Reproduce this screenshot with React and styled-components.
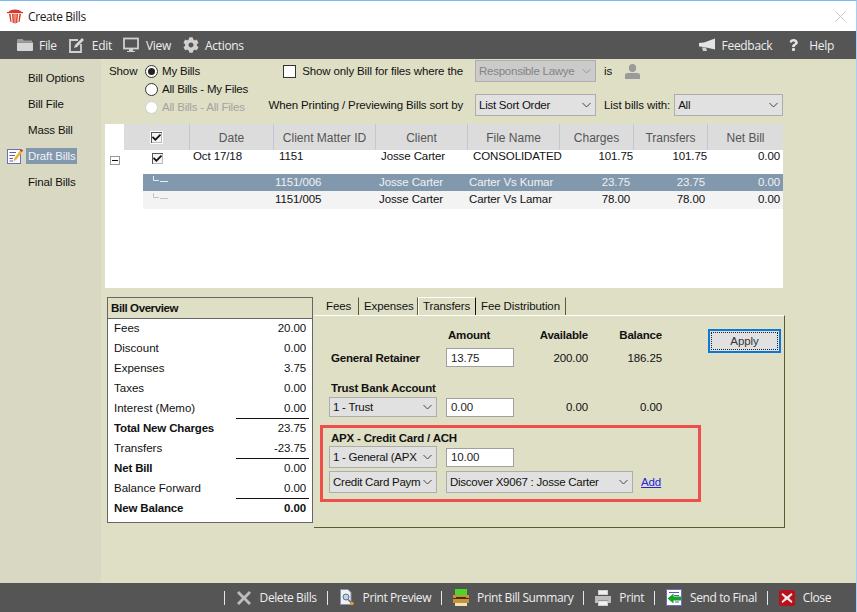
import React from "react";
import styled, { createGlobalStyle } from "styled-components";
import { FaCog, FaQuestion, FaCheck } from "react-icons/fa";

const GlobalStyle = createGlobalStyle`
  html, body {
    margin: 0;
    padding: 0;
    overflow: hidden;
  }
  * {
    box-sizing: border-box;
  }
`;

const Window = styled.div`
  width: 857px;
  height: 612px;
  display: flex;
  flex-direction: column;
  background: #dfdfc5;
  border-top: 1px solid #7cb8f2;
  border-right: 1px solid #a9cdf2;
  font-family: "Liberation Sans", Arial, sans-serif;
  font-size: 11.5px;
  letter-spacing: -0.1px;
  color: #111;
`;

const TitleBar = styled.div`
  height: 30px;
  flex: none;
  display: flex;
  align-items: center;
  background: #fff;
  padding: 0 10px 0 7px;
  font-family: "Open Sans", sans-serif;
  font-size: 12px;
  letter-spacing: -0.4px;
  color: #1a1a1a;
`;

const TitleText = styled.span`
  margin-left: 5px;
  flex: 1;
`;

const DarkBar = styled.div`
  flex: none;
  display: flex;
  align-items: center;
  background: #555;
  color: #eee;
  font-family: "Open Sans", sans-serif;
  font-size: 12px;
  letter-spacing: -0.3px;
`;

const MenuBar = styled(DarkBar)`
  height: 28px;
  padding: 0 22px 0 17px;
`;

const MenuItem = styled.div`
  display: flex;
  align-items: center;
  gap: ${(p) => p.$gap ?? 6}px;
  margin-right: ${(p) => p.$after ?? 12}px;
`;

const Spacer = styled.div`
  flex: 1;
`;

const Body = styled.div`
  flex: 1;
  display: flex;
  min-height: 0;
`;

const Sidebar = styled.div`
  width: 101px;
  flex: none;
  background: #d9d9c3;
  padding-top: 6px;
`;

const SideItem = styled.div`
  height: 26px;
  display: flex;
  align-items: center;
  padding-left: 7px;
`;

const SideIcon = styled.div`
  width: 16px;
  height: 17px;
  margin-right: 3px;
  flex: none;
`;

const SideLabel = styled.span`
  padding: 0 1px 0 2px;
  height: 16px;
  line-height: 16px;
  letter-spacing: -0.15px;
  background: ${(p) => (p.$active ? "#8298ad" : "transparent")};
  color: ${(p) => (p.$active ? "#f0f3f6" : "#111")};
`;

const Main = styled.div`
  flex: 1;
  display: flex;
  flex-direction: column;
  min-width: 0;
`;

const OptionsBar = styled.div`
  height: 65px;
  flex: none;
  display: flex;
  padding-left: 8px;
`;

const ShowBlock = styled.div`
  width: 161px;
  flex: none;
  display: flex;
  padding-top: 3px;
`;

const ShowLabel = styled.div`
  width: 36px;
  height: 18px;
  line-height: 18px;
`;

const RadioRow = styled.div`
  height: 18px;
  display: flex;
  align-items: center;
  gap: 4px;
  letter-spacing: -0.2px;
  color: ${(p) => (p.$disabled ? "#a3a3a3" : "#111")};
`;

const Radio = styled.span`
  width: 13px;
  height: 13px;
  flex: none;
  border-radius: 50%;
  background: #fff;
  border: 1px solid ${(p) => (p.$disabled ? "#cfcfcf" : "#333")};
  display: flex;
  align-items: center;
  justify-content: center;
  &::after {
    content: "";
    width: 7px;
    height: 7px;
    border-radius: 50%;
    background: ${(p) => (p.$checked ? "#222" : "transparent")};
  }
`;

const FilterGrid = styled.div`
  display: grid;
  grid-template-columns: 193px 121px auto;
  grid-template-rows: 22px 22px;
  column-gap: 12px;
  row-gap: 12px;
  padding-top: 1px;
  align-items: center;
`;

const FilterLabel = styled.div`
  display: flex;
  align-items: center;
  justify-content: flex-end;
  gap: 6px;
  white-space: nowrap;
  letter-spacing: -0.14px;
`;

const Check = styled.span`
  width: 13px;
  height: 13px;
  flex: none;
  background: #fff;
  border: 1px solid #333;
`;

const Trailing = styled.div`
  display: flex;
  align-items: center;
  gap: ${(p) => p.$gap}px;
  white-space: nowrap;
  margin-left: -4px;
`;

const Select = styled.div`
  width: ${(p) => p.$width || 108}px;
  height: ${(p) => p.$height || 22}px;
  flex: none;
  display: flex;
  align-items: center;
  padding: 0 4px 0 3px;
  letter-spacing: -0.25px;
  background: ${(p) => (p.$disabled ? "#cbcbcb" : "#e1e1e1")};
  border: 1px solid #adadad;
  color: ${(p) => (p.$disabled ? "#848484" : "#111")};
`;

const SelectText = styled.span`
  flex: 1;
  overflow: hidden;
  white-space: nowrap;
`;

const Chevron = ({ disabled }) => (
  <svg width="9" height="6" viewBox="0 0 9 6" style={{ flex: "none", marginLeft: 2 }}>
    <path d="M0.5 1 L4.5 5 L8.5 1" fill="none" stroke={disabled ? "#999" : "#444"} strokeWidth="1" />
  </svg>
);

const Dropdown = ({ children, width, height, disabled }) => (
  <Select $width={width} $height={height} $disabled={disabled}>
    <SelectText>{children}</SelectText>
    <Chevron disabled={disabled} />
  </Select>
);

const List = styled.div`
  width: 678px;
  height: 164px;
  flex: none;
  margin-left: 4px;
  background: #fff;
`;

const COLS = "66px 84px 102px 92px 92px 74px 74px 75px";

const HeaderRow = styled.div`
  display: grid;
  grid-template-columns: ${COLS};
  height: 26px;
  margin-left: 19px;
  background: #dcdcdc;
`;

const HeaderCell = styled.div`
  display: flex;
  align-items: center;
  justify-content: center;
  padding-top: ${(p) => (p.$flat ? 0 : 1)}px;
  font-size: 12px;
  letter-spacing: 0;
  color: #555;
  border-right: 1px solid #c6c6d2;
  &:last-child {
    border-right: none;
  }
`;

const ParentRow = styled.div`
  display: grid;
  grid-template-columns: 19px ${COLS};
  height: 24px;
`;

const SubRow = styled.div`
  display: grid;
  grid-template-columns: 47px 84px 102px 92px 92px 74px 74px 75px;
  margin-left: 38px;
  padding-bottom: ${(p) => p.$height - 16}px;
  height: ${(p) => p.$height}px;
  align-items: center;
  background: ${(p) => (p.$selected ? "#8298ad" : "#f3f3f3")};
  color: ${(p) => (p.$selected ? "#eef1f4" : "#111")};
`;

const Cell = styled.div`
  text-align: ${(p) => (p.$right ? "right" : "left")};
  padding-left: ${(p) => (p.$right ? 0 : p.$pad ?? 0)}px;
  padding-right: ${(p) => (p.$right ? p.$pad ?? 0 : 0)}px;
  white-space: nowrap;
`;

const CheckCell = styled.div`
  display: flex;
  justify-content: center;
  padding-top: ${(p) => p.$top || 0}px;
`;

const ToggleCell = styled.div`
  padding: 6px 0 0 5px;
`;

const Toggle = styled.div`
  width: 10px;
  height: 9px;
  border: 1px solid #999;
  background: #fff;
  display: flex;
  align-items: center;
  justify-content: center;
  &::after {
    content: "";
    width: 6px;
    height: 1px;
    background: #111;
  }
`;

const GridCheck = styled.div`
  width: 13px;
  height: 13px;
  display: flex;
  align-items: center;
  justify-content: center;
  background: #f4f4f4;
  border: 1px solid #fff;
  box-shadow: inset 1px 1px 0 #555, inset -1px -1px 0 #bbb;
  color: #111;
  font-size: 9px;
`;

const BottomArea = styled.div`
  display: flex;
  padding: 9px 0 0 6px;
`;

const Overview = styled.div`
  width: 206px;
  height: 226px;
  flex: none;
  display: flex;
  flex-direction: column;
  background: #fff;
  border: 1px solid #666;
`;

const OverviewHeader = styled.div`
  height: 21px;
  flex: none;
  display: flex;
  align-items: center;
  padding-left: 3px;
  background: #dfdfc5;
  border-bottom: 1px solid #666;
  font-weight: bold;
  letter-spacing: -0.4px;
`;

const OverviewRow = styled.div`
  height: 20px;
  display: flex;
  align-items: stretch;
  justify-content: space-between;
  padding: 0 3px 0 6px;
  font-weight: ${(p) => (p.$bold ? "bold" : "normal")};
  letter-spacing: ${(p) => (p.$bold ? "-0.15px" : "0")};
`;

const OverviewName = styled.span`
  line-height: 19px;
`;

const OverviewValue = styled.span`
  width: 73px;
  text-align: right;
  padding-right: 3px;
  line-height: 19px;
  letter-spacing: -0.1px;
  font-weight: ${(p) => (p.$bold ? "bold" : "normal")};
  border-bottom: 1px solid ${(p) => (p.$line ? "#111" : "transparent")};
`;

const TabArea = styled.div`
  width: 471px;
  height: 231px;
  flex: none;
  margin-left: 1px;
  display: flex;
  flex-direction: column;
`;

const TabStrip = styled.div`
  height: 18px;
  flex: none;
  display: flex;
  align-items: stretch;
  padding-left: 7px;
`;

const Tab = styled.div`
  display: flex;
  align-items: center;
  width: ${(p) => p.$width}px;
  padding: 0 0 2px ${(p) => p.$pad}px;
  white-space: nowrap;
  border-right: 1px solid ${(p) => (p.$active ? "#111" : "#5c5c32")};
  border-left: 1px solid ${(p) => (p.$active ? "#fff" : "transparent")};
  border-top: 1px solid ${(p) => (p.$active ? "#fff" : "transparent")};
`;

const TabPanel = styled.div`
  flex: 1;
  display: flex;
  padding-left: 15px;
  border-top: 1px solid #fff;
  border-right: 1px solid #5c5c32;
  border-bottom: 1px solid #5c5c32;
`;

const TransferColumn = styled.div`
  width: 372px;
  flex: none;
`;

const AmountRow = styled.div`
  display: grid;
  grid-template-columns: 108px 68px 65px 65px;
  column-gap: 9px;
  align-items: center;
  height: ${(p) => p.$height}px;
  margin-top: ${(p) => p.$top}px;
`;

const Heading = styled.div`
  font-weight: bold;
  letter-spacing: -0.2px;
  white-space: nowrap;
  padding-left: ${(p) => p.$pad ?? 2}px;
  text-align: ${(p) => (p.$right ? "right" : "left")};
`;

const Amount = styled.div`
  text-align: right;
`;

const Input = styled.div`
  width: 68px;
  height: 19px;
  display: flex;
  align-items: center;
  padding-left: 4px;
  background: #fff;
  border: 1px solid #a0a0a0;
  color: #222;
`;

const SectionTitle = styled(Heading)`
  height: 14px;
  line-height: 14px;
  margin-top: ${(p) => p.$top}px;
`;

const CardBox = styled.div`
  width: 381px;
  height: 77px;
  margin: 8px 0 0 -9px;
  padding: 3px 0 0 6px;
  border: 3px solid #ef4f4b;
`;

const CardRow = styled.div`
  display: flex;
  align-items: center;
  gap: 9px;
  height: 22px;
  margin-top: ${(p) => p.$top}px;
`;

const AddLink = styled.a`
  margin-left: -1px;
  color: #2323e0;
  text-decoration: underline;
`;

const ApplyButton = styled.div`
  width: 73px;
  height: 24px;
  flex: none;
  margin: 13px 0 0 7px;
  padding: 1px;
  display: flex;
  background: #e1e1e1;
  border: 2px solid #0a78d7;
`;

const ApplyInner = styled.div`
  flex: 1;
  display: flex;
  align-items: center;
  justify-content: center;
  border: 1px dotted #222;
  color: #333;
`;

const Footer = styled(DarkBar)`
  height: 29px;
  justify-content: flex-end;
  padding-right: 25px;
  letter-spacing: -0.41px;
`;

const FooterAction = styled.div`
  display: flex;
  align-items: center;
  &::before {
    content: "";
    width: 1px;
    height: 14px;
    margin: 0 11px 0 10px;
    background: #e6e6e6;
  }
`;

const FooterLabel = styled.span`
  margin-left: 8px;
`;

const LogoIcon = () => (
  <svg width="16" height="16" viewBox="0 0 16 16">
    <path d="M1 4.5 C3 0.5 13 0.5 15 4.5 Z" fill="#d83a26" />
    <path d="M0 4 H16 V5.2 H0 Z" fill="#d83a26" />
    <path d="M2 6 H3.6 L4.6 14 H3.4 Z M5 6 H6.6 L7 15 H5.7 Z M9.4 6 H11 L10.3 15 H9 Z M12.4 6 H14 L12.6 14 H11.4 Z M7.4 6 H8.6 V15.5 H7.4 Z" fill="#d83a26" />
  </svg>
);

const CloseIcon = () => (
  <svg width="11" height="11" viewBox="0 0 11 11">
    <path d="M0.5 0.5 L10.5 10.5 M10.5 0.5 L0.5 10.5" stroke="#c4c4c4" strokeWidth="1" />
  </svg>
);

const FolderIcon = () => (
  <svg width="16" height="14" viewBox="0 0 16 14">
    <path d="M0 2 Q0 1 1 1 H5.5 L7 2.5 H15 V4 H0 Z" fill="#9c9c9c" />
    <path d="M0 4.5 H16 V12 Q16 13 15 13 H1 Q0 13 0 12 Z" fill="#d6d6d6" />
  </svg>
);

const EditIcon = () => (
  <svg width="16" height="16" viewBox="0 0 16 16">
    <path d="M9 3 H1 V15 H12 V7" fill="none" stroke="#d0d0d0" strokeWidth="1.8" />
    <path d="M5 11 L6 8 L13 1 L15 3 L8 10 Z" fill="#d8d8d8" />
  </svg>
);

const MonitorIcon = () => (
  <svg width="16" height="16" viewBox="0 0 16 16">
    <rect x="1" y="1.5" width="14" height="10" fill="none" stroke="#d0d0d0" strokeWidth="1.8" />
    <path d="M6 12 H10 V14 H12 V15 H4 V14 H6 Z" fill="#d0d0d0" />
  </svg>
);

const MegaphoneIcon = () => (
  <svg width="16" height="14" viewBox="0 0 16 14">
    <path d="M0 5 L5 4.5 L16 0.5 V11.5 L5 9 L0 8.5 Z" fill="#e4e4e4" />
    <path d="M3 9.5 H7 L8 13 H4 Z" fill="#d0d0d0" />
  </svg>
);

const UserIcon = () => (
  <svg width="15" height="15" viewBox="0 0 15 15">
    <ellipse cx="7.5" cy="4" rx="3.6" ry="4" fill="#9a9a9a" />
    <path d="M0 15 V11 Q0 9 3 9 H12 Q15 9 15 11 V15 Z" fill="#9a9a9a" />
  </svg>
);

const NotepadIcon = () => (
  <svg width="16" height="17" viewBox="0 0 16 17">
    <rect x="0.5" y="1.5" width="13" height="14" fill="#fff" stroke="#6c70b8" />
    <path d="M2.5 4.5 H9 M2.5 7.5 H8 M2.5 10.5 H6 M2.5 13 H6" stroke="#5a5fb0" strokeWidth="1" />
    <path d="M6.5 13.5 L7.5 10 L13 2.5 L15 4 L9.5 11.5 Z" fill="#eab52c" />
    <path d="M13 2.5 L14 1 L16 2.5 L15 4 Z" fill="#d8261c" />
  </svg>
);

const TreeIcon = ({ color }) => (
  <svg
    width="16"
    height="7"
    viewBox="0 0 16 7"
    style={{ marginLeft: 10, display: "block", alignSelf: "start", marginTop: 2 }}
  >
    <path d="M0.5 0 V4.5 H6 M7 5.5 H15" fill="none" stroke={color} strokeWidth="1" />
  </svg>
);

const TrashIcon = () => (
  <svg width="16" height="16" viewBox="0 0 16 16">
    <path d="M1 3 L3 1 L8 6 L13 1 L15 3 L10 8 L15 13 L13 15 L8 10 L3 15 L1 13 L6 8 Z" fill="#bdbdbd" />
  </svg>
);

const PreviewIcon = () => (
  <svg width="16" height="17" viewBox="0 0 16 17">
    <path d="M1.5 0.5 H9 L12 3.5 V15.5 H1.5 Z" fill="#eef1f6" stroke="#8a94a8" />
    <circle cx="7" cy="8" r="3" fill="#bcd0e6" stroke="#66707f" />
    <path d="M9 10.5 L12.5 14" stroke="#66707f" strokeWidth="1.6" />
    <circle cx="13" cy="14.5" r="1.8" fill="#e79a2b" />
  </svg>
);

const SummaryIcon = () => (
  <svg width="16" height="17" viewBox="0 0 16 17">
    <rect x="2" y="0" width="12" height="7" fill="#49d829" />
    <rect x="0" y="6" width="16" height="8" fill="#c8923a" />
    <path d="M0 9.5 H16" stroke="#4a3410" strokeWidth="1" />
    <rect x="3" y="8" width="10" height="1" fill="#3d2c0c" />
    <rect x="2" y="14" width="12" height="3" fill="#f3e2b8" />
  </svg>
);

const PrintIcon = () => (
  <svg width="16" height="16" viewBox="0 0 16 16">
    <rect x="3.5" y="0.5" width="9" height="4" fill="#f0f0f0" stroke="#cfcfcf" />
    <path d="M0 6 H16 V13 H13 V10 H3 V13 H0 Z" fill="#bcbcbc" />
    <rect x="3.5" y="11" width="9" height="4.5" fill="#f0f0f0" stroke="#cfcfcf" />
  </svg>
);

const SendIcon = () => (
  <svg width="16" height="17" viewBox="0 0 16 17">
    <rect x="0.5" y="0.5" width="15" height="16" fill="#fff" stroke="#6c70b8" />
    <path d="M3 3.5 H13 M8 6.5 H13 M9 13 H13" stroke="#5a5fb0" strokeWidth="1" />
    <path d="M1.5 9.5 L7.5 4.5 V7.5 H15 V11.5 H7.5 V14.5 Z" fill="#12a51e" />
  </svg>
);

const CloseBadgeIcon = () => (
  <svg width="16" height="16" viewBox="0 0 16 16">
    <rect x="0" y="0" width="16" height="16" rx="2.5" fill="#b8111a" />
    <path d="M3.5 3 L8 6.4 L12.5 3 L13.5 4.5 L10 8 L13.5 11.5 L12.5 13 L8 9.6 L3.5 13 L2.5 11.5 L6 8 L2.5 4.5 Z" fill="#f1ecec" />
  </svg>
);

const sideItems = ["Bill Options", "Bill File", "Mass Bill", "Draft Bills", "Final Bills"];

const subRows = [
  { id: "1151/006", client: "Josse Carter", file: "Carter Vs Kumar", charges: "23.75", transfers: "23.75", net: "0.00", selected: true, height: 17 },
  { id: "1151/005", client: "Josse Carter", file: "Carter Vs Lamar", charges: "78.00", transfers: "78.00", net: "0.00", height: 18 },
];

const overviewRows = [
  { name: "Fees", value: "20.00" },
  { name: "Discount", value: "0.00" },
  { name: "Expenses", value: "3.75" },
  { name: "Taxes", value: "0.00" },
  { name: "Interest (Memo)", value: "0.00", line: true },
  { name: "Total New Charges", value: "23.75", bold: true },
  { name: "Transfers", value: "-23.75", line: true },
  { name: "Net Bill", value: "0.00", bold: true },
  { name: "Balance Forward", value: "0.00", line: true },
  { name: "New Balance", value: "0.00", bold: true, boldValue: true },
];

const footerActions = [
  { label: "Delete Bills", icon: <TrashIcon /> },
  { label: "Print Preview", icon: <PreviewIcon /> },
  { label: "Print Bill Summary", icon: <SummaryIcon /> },
  { label: "Print", icon: <PrintIcon /> },
  { label: "Send to Final", icon: <SendIcon /> },
  { label: "Close", icon: <CloseBadgeIcon /> },
];

const App = () => {
  return (
    <Window>
      <GlobalStyle />
      <TitleBar>
        <LogoIcon />
        <TitleText>Create Bills</TitleText>
        <CloseIcon />
      </TitleBar>
      <MenuBar>
        <MenuItem>
          <FolderIcon />
          File
        </MenuItem>
        <MenuItem $gap={7} $after={11}>
          <EditIcon />
          Edit
        </MenuItem>
        <MenuItem $gap={7}>
          <MonitorIcon />
          View
        </MenuItem>
        <MenuItem>
          <FaCog size={16} color="#d0d0d0" />
          Actions
        </MenuItem>
        <Spacer />
        <MenuItem $gap={7} $after={17}>
          <MegaphoneIcon />
          Feedback
        </MenuItem>
        <MenuItem $gap={11} $after={0}>
          <FaQuestion color="#e4e4e4" style={{ width: 9, height: 14 }} />
          Help
        </MenuItem>
      </MenuBar>
      <Body>
        <Sidebar>
          {sideItems.map((item) => (
            <SideItem key={item}>
              <SideIcon>{item === "Draft Bills" && <NotepadIcon />}</SideIcon>
              <SideLabel $active={item === "Draft Bills"}>{item}</SideLabel>
            </SideItem>
          ))}
        </Sidebar>
        <Main>
          <OptionsBar>
            <ShowBlock>
              <ShowLabel>Show</ShowLabel>
              <div>
                <RadioRow>
                  <Radio $checked />
                  My Bills
                </RadioRow>
                <RadioRow>
                  <Radio />
                  All Bills - My Files
                </RadioRow>
                <RadioRow $disabled>
                  <Radio $disabled />
                  All Bills - All Files
                </RadioRow>
              </div>
            </ShowBlock>
            <FilterGrid>
              <FilterLabel>
                <Check />
                Show only Bill for files where the
              </FilterLabel>
              <Dropdown width={121} disabled>
                Responsible Lawye
              </Dropdown>
              <Trailing $gap={13}>
                is
                <UserIcon />
              </Trailing>
              <FilterLabel>When Printing / Previewing Bills sort by</FilterLabel>
              <Dropdown width={121}>List Sort Order</Dropdown>
              <Trailing $gap={4}>
                List bills with:
                <Dropdown width={109}>All</Dropdown>
              </Trailing>
            </FilterGrid>
          </OptionsBar>
          <List>
            <HeaderRow>
              <HeaderCell $flat>
                <GridCheck>
                  <FaCheck />
                </GridCheck>
              </HeaderCell>
              <HeaderCell>Date</HeaderCell>
              <HeaderCell>Client Matter ID</HeaderCell>
              <HeaderCell>Client</HeaderCell>
              <HeaderCell>File Name</HeaderCell>
              <HeaderCell>Charges</HeaderCell>
              <HeaderCell>Transfers</HeaderCell>
              <HeaderCell>Net Bill</HeaderCell>
            </HeaderRow>
            <ParentRow>
              <ToggleCell>
                <Toggle />
              </ToggleCell>
              <CheckCell $top={2}>
                <GridCheck>
                  <FaCheck />
                </GridCheck>
              </CheckCell>
              <Cell $pad={3}>Oct 17/18</Cell>
              <Cell $pad={5}>1151</Cell>
              <Cell $pad={5}>Josse Carter</Cell>
              <Cell $pad={5}>CONSOLIDATED</Cell>
              <Cell $right $pad={1}>101.75</Cell>
              <Cell $right $pad={1}>101.75</Cell>
              <Cell $right $pad={3}>0.00</Cell>
            </ParentRow>
            {subRows.map((row) => (
              <SubRow key={row.id} $selected={row.selected} $height={row.height}>
                <TreeIcon color={row.selected ? "#e8edf2" : "#c4c4c4"} />
                <span />
                <Cell $pad={1}>{row.id}</Cell>
                <Cell $pad={3}>{row.client}</Cell>
                <Cell $pad={1}>{row.file}</Cell>
                <Cell $right $pad={4}>{row.charges}</Cell>
                <Cell $right $pad={3}>{row.transfers}</Cell>
                <Cell $right $pad={3}>{row.net}</Cell>
              </SubRow>
            ))}
          </List>
          <BottomArea>
            <Overview>
              <OverviewHeader>Bill Overview</OverviewHeader>
              {overviewRows.map((row) => (
                <OverviewRow key={row.name} $bold={row.bold}>
                  <OverviewName>{row.name}</OverviewName>
                  <OverviewValue $line={row.line} $bold={row.boldValue}>
                    {row.value}
                  </OverviewValue>
                </OverviewRow>
              ))}
            </Overview>
            <TabArea>
              <TabStrip>
                <Tab $width={38} $pad={4}>Fees</Tab>
                <Tab $width={59} $pad={4}>Expenses</Tab>
                <Tab $width={58} $pad={4} $active>Transfers</Tab>
                <Tab $width={90} $pad={4}>Fee Distribution</Tab>
              </TabStrip>
              <TabPanel>
                <TransferColumn>
                  <AmountRow $height={16} $top={11}>
                    <span />
                    <Heading>Amount</Heading>
                    <Heading $right $pad={0}>Available</Heading>
                    <Heading $right $pad={0}>Balance</Heading>
                  </AmountRow>
                  <AmountRow $height={19} $top={5}>
                    <Heading>General Retainer</Heading>
                    <Input>13.75</Input>
                    <Amount>200.00</Amount>
                    <Amount>186.25</Amount>
                  </AmountRow>
                  <SectionTitle $top={14}>Trust Bank Account</SectionTitle>
                  <AmountRow $height={20} $top={2}>
                    <Dropdown height={20}>1 - Trust</Dropdown>
                    <Input>0.00</Input>
                    <Amount>0.00</Amount>
                    <Amount>0.00</Amount>
                  </AmountRow>
                  <CardBox>
                    <SectionTitle $top={0}>APX - Credit Card / ACH</SectionTitle>
                    <CardRow $top={1}>
                      <Dropdown>1 - General (APX</Dropdown>
                      <Input>10.00</Input>
                    </CardRow>
                    <CardRow $top={3}>
                      <Dropdown>Credit Card Paym</Dropdown>
                      <Dropdown width={187}>Discover X9067 : Josse Carter</Dropdown>
                      <AddLink>Add</AddLink>
                    </CardRow>
                  </CardBox>
                </TransferColumn>
                <ApplyButton>
                  <ApplyInner>Apply</ApplyInner>
                </ApplyButton>
              </TabPanel>
            </TabArea>
          </BottomArea>
        </Main>
      </Body>
      <Footer>
        {footerActions.map((action) => (
          <FooterAction key={action.label}>
            {action.icon}
            <FooterLabel>{action.label}</FooterLabel>
          </FooterAction>
        ))}
      </Footer>
    </Window>
  );
};

export default App;
